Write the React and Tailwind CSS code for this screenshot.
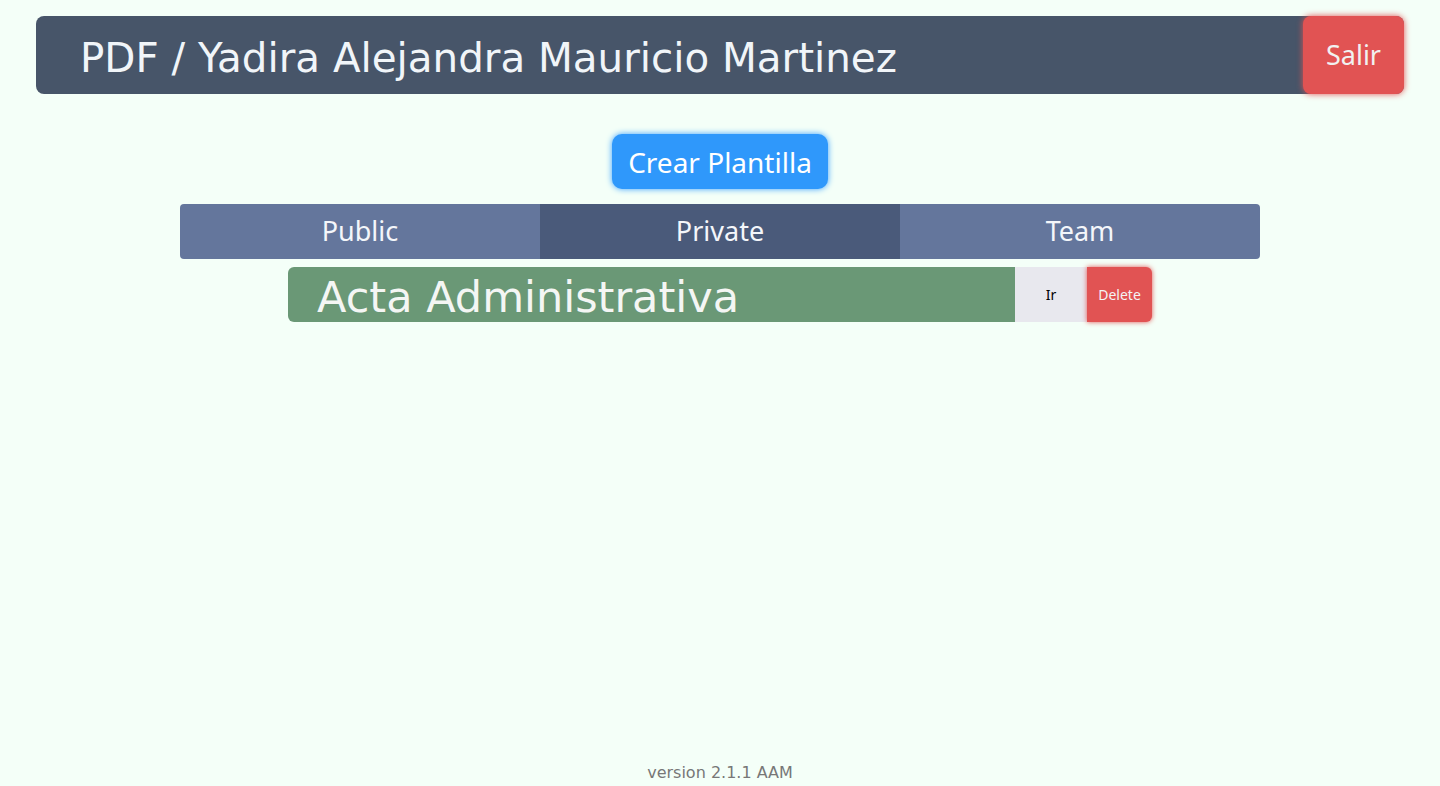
export default function App() {
  const ub = { fontFamily: '"Noto Sans", "Open Sans", sans-serif' };
  return (
    <div className="min-h-[786px] bg-[#f4fff8] flex flex-col" style={{ fontFamily: '"DejaVu Sans", sans-serif' }}>
      <div className="mx-[36px] mt-4 h-[78px] flex rounded-lg bg-[#475569]">
        <div className="flex-1 flex items-center pl-[44px] pt-[6px] text-[40.4px] text-[#f1f5f9]">
          PDF / Yadira Alejandra Mauricio Martinez
        </div>
        <button
          className="w-[101px] h-full rounded-lg bg-[#e15353] text-[#f1f1f1] text-[27px] shadow-[0_0_6px_#e15353]"
          style={ub}
        >
          Salir
        </button>
      </div>

      <div className="flex justify-center mt-10">
        <button
          className="w-[216px] h-[55px] rounded-[10px] bg-[#2f98fb] text-white text-[28px] shadow-[0_0_6px_#3ba0ff]"
          style={ub}
        >
          Crear Plantilla
        </button>
      </div>

      <div className="mt-[15px] mx-auto w-[1080px] h-[55px] grid grid-cols-3 rounded overflow-hidden text-[27px] text-[#f4f6fa]" style={ub}>
        <div className="bg-[#64769c] flex items-center justify-center">Public</div>
        <div className="bg-[#4a5a7a] flex items-center justify-center">Private</div>
        <div className="bg-[#64769c] flex items-center justify-center">Team</div>
      </div>

      <div className="mt-2 mx-auto w-[864px] h-[55px] flex">
        <div className="flex-1 bg-[#6a9876] rounded-l-md flex items-center pl-[29px] pt-[5px] text-[43px] text-[#f4f6f4]">
          Acta Administrativa
        </div>
        <button className="w-[72px] h-full bg-[#e8e8ee] text-[14px] text-black" style={ub}>Ir</button>
        <button
          className="w-[65px] h-full bg-[#e15353] rounded-r-md text-[14px] text-[#f4f4f4] shadow-[0_0_5px_#e15353]"
          style={ub}
        >
          Delete
        </button>
      </div>

      <div className="flex-1" />
      <div className="text-center text-[16px] text-[#777777] pb-[3px] leading-[20px]">version 2.1.1 AAM</div>
    </div>
  );
}
